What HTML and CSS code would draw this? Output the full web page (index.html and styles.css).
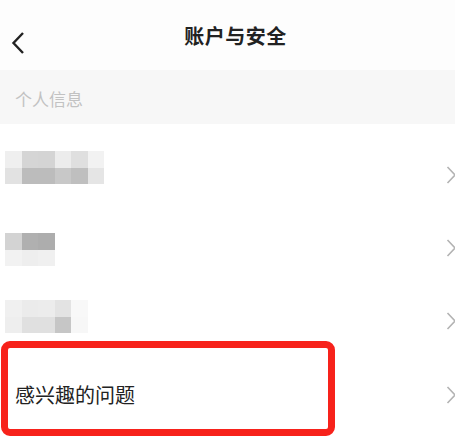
FILE: index.html
```
<!DOCTYPE html>
<html lang="zh-CN">
<head>
  <meta charset="UTF-8">
  <meta name="viewport" content="width=device-width, initial-scale=1.0">
  <title>账户与安全</title>
  <link rel="stylesheet" href="styles.css">
</head>
<body>
  <div class="page">
    <div class="topbar">
      <svg class="back" width="14" height="24" viewBox="0 0 14 24">
        <path d="M12 2 L2.5 12 L12 22" fill="none" stroke="#222" stroke-width="2.4"/>
      </svg>
      <span class="title">账户与安全</span>
    </div>

    <div class="section">个人信息</div>

    <div class="list">
      <div class="row">
        <div class="blur blur1">
          <i style="background:#efefef"></i><i style="background:#d5d5d5"></i><i style="background:#d4d4d4"></i><i style="background:#ececec"></i><i style="background:#dfdfdf"></i><i style="background:#f2f2f2"></i>
          <i style="background:#e2e2e2"></i><i style="background:#bcbcbc"></i><i style="background:#bcbcbc"></i><i style="background:#c8c8c8"></i><i style="background:#bfbfbf"></i><i style="background:#e5e5e5"></i>
        </div>
        <svg class="arrow" width="10" height="20" viewBox="0 0 10 20"><path d="M1.5 2 L9 10 L1.5 18" fill="none" stroke="#b3b3b3" stroke-width="1.6"/></svg>
      </div>
      <div class="row">
        <div class="blur blur2">
          <i style="background:#d3d3d3"></i><i style="background:#b0b0b0"></i><i style="background:#adadad"></i>
          <i style="background:#f2f2f2"></i><i style="background:#eeeeee"></i><i style="background:#f0f0f0"></i>
        </div>
        <svg class="arrow" width="10" height="20" viewBox="0 0 10 20"><path d="M1.5 2 L9 10 L1.5 18" fill="none" stroke="#b3b3b3" stroke-width="1.6"/></svg>
      </div>
      <div class="row">
        <div class="blur blur3">
          <i style="background:#f0f0f0"></i><i style="background:#ebebeb"></i><i style="background:#ececec"></i><i style="background:#e3e3e3"></i><i style="background:#f8f8f8"></i>
          <i style="background:#eeeeee"></i><i style="background:#e0e0e0"></i><i style="background:#e0e0e0"></i><i style="background:#c6c6c6"></i><i style="background:#f7f7f7"></i>
        </div>
        <svg class="arrow" width="10" height="20" viewBox="0 0 10 20"><path d="M1.5 2 L9 10 L1.5 18" fill="none" stroke="#b3b3b3" stroke-width="1.6"/></svg>
      </div>
      <div class="row marked">
        <span class="label">感兴趣的问题</span>
        <svg class="arrow" width="10" height="20" viewBox="0 0 10 20"><path d="M1.5 2 L9 10 L1.5 18" fill="none" stroke="#b3b3b3" stroke-width="1.6"/></svg>
        <div class="highlight"></div>
      </div>
    </div>
  </div>
</body>
</html>
```

FILE: styles.css
```
*{
  margin:0;
  padding:0;
  box-sizing:border-box;
}
body{
  font-family:"Noto Sans CJK SC","Noto Sans",sans-serif;
  background:#fff;
  overflow:hidden;
}
.page{
  width:455px;
  height:437px;
  background:#fff;
}
.topbar{
  height:70px;
  display:flex;
  align-items:center;
  position:relative;
  background:#fdfdfd;
}
.back{
  position:absolute;
  left:11px;
  top:31px;
}
.title{
  flex:1;
  text-align:center;
  padding-left:16px;
  font-size:20px;
  font-weight:bold;
  color:#222;
  letter-spacing:0.5px;
}
.section{
  height:54px;
  background:#f7f7f7;
  color:#c2c2c2;
  font-size:17px;
  padding-left:15px;
  display:flex;
  align-items:center;
  padding-top:2px;
}
.list{
  padding-top:14px;
}
.row{
  height:73px;
  display:flex;
  align-items:center;
  justify-content:space-between;
  padding-left:5px;
  position:relative;
}
.arrow{
  margin-right:-1px;
}
.blur{
  display:grid;
  grid-auto-rows:16.5px;
}
.blur i{
  display:block;
}
.blur1{
  grid-template-columns:repeat(6,16.5px);
  margin-bottom:14px;
}
.blur2{
  grid-template-columns:repeat(3,16.5px);
  margin-top:4px;
}
.blur3{
  grid-template-columns:repeat(5,16.5px);
  margin-bottom:8px;
}
.label{
  font-size:20px;
  color:#222;
  padding-left:10px;
  margin-top:2px;
}
.marked .arrow{
  margin-top:2px;
}
.highlight{
  position:absolute;
  left:1px;
  top:-16px;
  width:334px;
  height:95px;
  border:7px solid #f7221b;
  border-radius:9px;
}
```
